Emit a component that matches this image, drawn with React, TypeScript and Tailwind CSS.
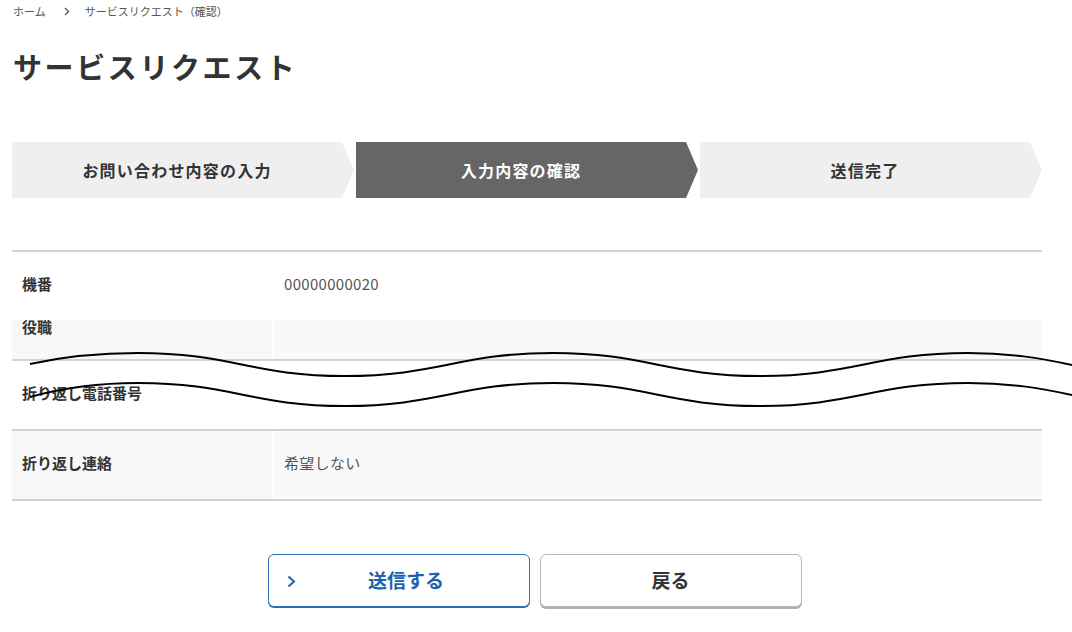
const font = "[font-family:'Noto_Sans_CJK_JP','Noto_Sans',sans-serif]"

const steps = [
  { label: 'お問い合わせ内容の入力', active: false },
  { label: '入力内容の確認', active: true },
  { label: '送信完了', active: false },
]

function Row({ label, value, shaded }: { label: string; value?: string; shaded?: boolean }) {
  return (
    <div className="flex h-[68px] shrink-0 items-center">
      <div
        className={`flex h-full w-[260px] shrink-0 items-center pb-[3px] pl-[10px] text-[15px] font-bold text-[#333] ${
          shaded ? 'bg-[#f8f8f8]' : 'bg-white'
        }`}
      >
        {label}
      </div>
      <div
        className={`flex h-full flex-1 items-center border-l-2 border-white pb-[3px] pl-[10px] text-[15px] tracking-[0.3px] text-[#555] ${
          shaded ? 'bg-[#f9f9f9]' : 'bg-white'
        }`}
      >
        {value}
      </div>
    </div>
  )
}

export default function App() {
  return (
    <div className={`relative h-[632px] w-[1072px] overflow-hidden bg-white ${font}`}>
      {/* breadcrumb */}
      <div className="flex items-center pl-[13px] pt-[3px] text-[11px] leading-[16px] text-[#555]">
        <span>ホーム</span>
        <svg className="ml-[18px] mr-[15px]" width="6" height="9" viewBox="0 0 6 9">
          <polyline points="1,1 4.5,4.5 1,8" fill="none" stroke="#555" strokeWidth="1.3" />
        </svg>
        <span>サービスリクエスト（確認）</span>
      </div>

      <h1 className="mt-[27px] pl-[13px] text-[29px] font-bold leading-[40px] tracking-[2.6px] text-[#333]">
        サービスリクエスト
      </h1>

      {/* steps */}
      <div className="ml-[12px] mt-[56px] grid w-[1030px] grid-cols-3 gap-[2px]">
        {steps.map((s) => (
          <div
            key={s.label}
            className={`flex h-[56px] items-center justify-center pr-[12px] text-[16px] font-bold tracking-[1.2px] [clip-path:polygon(0_0,calc(100%_-_12px)_0,100%_50%,calc(100%_-_12px)_100%,0_100%)] ${
              s.active ? 'bg-[#666] text-white' : 'bg-[#efefef] text-[#333]'
            }`}
          >
            {s.label}
          </div>
        ))}
      </div>

      {/* confirm table */}
      <div className="ml-[12px] mt-[52px] flex w-[1030px] flex-col border-t-2 border-[#d3d3d3]">
        <Row label="機番" value="00000000020" />
        <div className="flex h-[41px] flex-col justify-end overflow-hidden border-b-2 border-[#d3d3d3]">
          <div className="-mb-[4px]">
            <Row label="役職" shaded />
          </div>
        </div>
        <div className="border-b-2 border-[#d3d3d3]">
          <Row label="折り返し電話番号" />
        </div>
        <div className="border-b-2 border-[#d3d3d3]">
          <Row label="折り返し連絡" value="希望しない" shaded />
        </div>
      </div>

      {/* buttons */}
      <div className="mt-[53px] flex justify-center gap-[10px] pr-[3px]">
        <button className="relative flex h-[53px] w-[262px] items-center justify-center rounded-[6px] border border-[#2f72bb] bg-white pl-[15px] text-[19px] font-bold text-[#1d62ae] shadow-[0_1px_0_#2a69ad]">
          <svg className="absolute left-[18px] top-[20px]" width="9" height="13" viewBox="0 0 9 13">
            <polyline points="1.5,1.5 7,6.5 1.5,11.5" fill="none" stroke="#1d62ae" strokeWidth="2" />
          </svg>
          送信する
        </button>
        <button className="flex h-[53px] w-[262px] items-center justify-center rounded-[6px] border border-[#b8b8b8] bg-white text-[19px] font-bold text-[#333] shadow-[0_2px_0_#b0b0b0]">
          戻る
        </button>
      </div>

      {/* omission marks drawn over the table */}
      <svg className="pointer-events-none absolute left-0 top-0" width="1072" height="632" viewBox="0 0 1072 632">
        <path
          d="M30 364 C66 356 100 353 138 353 C231 353 252 376 345 376 C438 376 460 353 553 353 C646 353 667 376 760 376 C853 376 875 353 968 353 C1010 353 1040 358 1072 365"
          fill="none"
          stroke="#000"
          strokeWidth="2"
        />
        <path
          d="M30 397 C66 387 100 383 138 383 C231 383 252 406 345 406 C438 406 460 383 553 383 C646 383 667 406 760 406 C853 406 875 383 968 383 C1010 383 1040 388 1072 395"
          fill="none"
          stroke="#000"
          strokeWidth="2"
        />
      </svg>
    </div>
  )
}
